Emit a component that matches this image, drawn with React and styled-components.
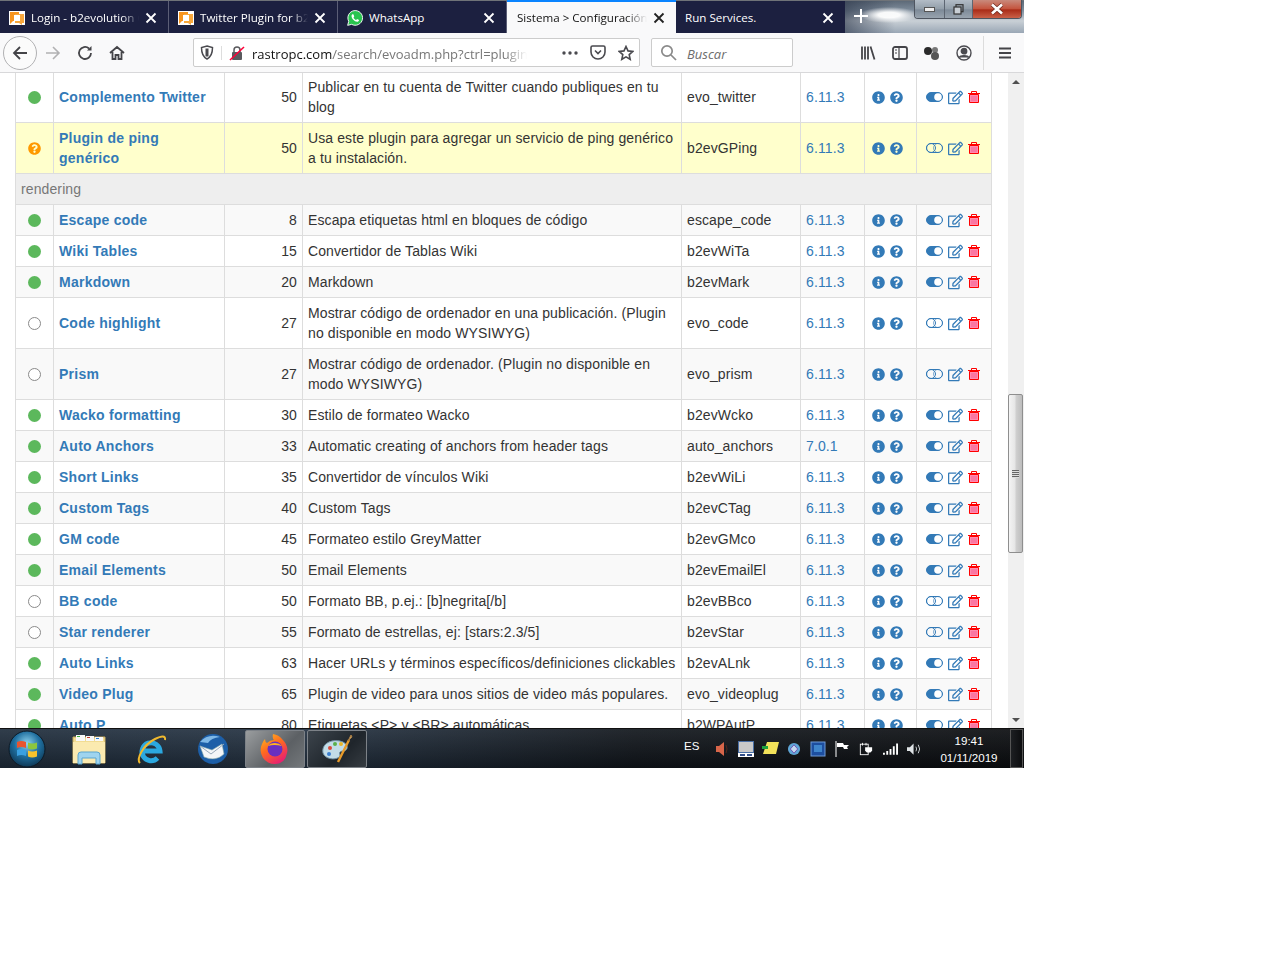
import React from 'react'
import styled, { createGlobalStyle } from 'styled-components'
import { FaInfoCircle, FaQuestionCircle, FaRegEdit } from 'react-icons/fa'

const GlobalStyle = createGlobalStyle`
  html, body { margin: 0; padding: 0; background: #fff; }
  body { font-family: "Liberation Sans", Arial, sans-serif; }
  svg { flex: none; display: block; }
`

const groupOne = [
  { state: 'on', name: 'Complemento Twitter', prio: 50, desc: 'Publicar en tu cuenta de Twitter cuando publiques en tu blog', code: 'evo_twitter' },
  { state: 'warn', name: 'Plugin de ping genérico', prio: 50, desc: 'Usa este plugin para agregar un servicio de ping genérico a tu instalación.', code: 'b2evGPing' },
]

const groupTwo = [
  { state: 'on', name: 'Escape code', prio: 8, desc: 'Escapa etiquetas html en bloques de código', code: 'escape_code' },
  { state: 'on', name: 'Wiki Tables', prio: 15, desc: 'Convertidor de Tablas Wiki', code: 'b2evWiTa' },
  { state: 'on', name: 'Markdown', prio: 20, desc: 'Markdown', code: 'b2evMark' },
  { state: 'off', name: 'Code highlight', prio: 27, desc: 'Mostrar código de ordenador en una publicación. (Plugin no disponible en modo WYSIWYG)', code: 'evo_code' },
  { state: 'off', name: 'Prism', prio: 27, desc: 'Mostrar código de ordenador. (Plugin no disponible en modo WYSIWYG)', code: 'evo_prism' },
  { state: 'on', name: 'Wacko formatting', prio: 30, desc: 'Estilo de formateo Wacko', code: 'b2evWcko' },
  { state: 'on', name: 'Auto Anchors', prio: 33, desc: 'Automatic creating of anchors from header tags', code: 'auto_anchors', version: '7.0.1' },
  { state: 'on', name: 'Short Links', prio: 35, desc: 'Convertidor de vínculos Wiki', code: 'b2evWiLi' },
  { state: 'on', name: 'Custom Tags', prio: 40, desc: 'Custom Tags', code: 'b2evCTag' },
  { state: 'on', name: 'GM code', prio: 45, desc: 'Formateo estilo GreyMatter', code: 'b2evGMco' },
  { state: 'on', name: 'Email Elements', prio: 50, desc: 'Email Elements', code: 'b2evEmailEl' },
  { state: 'off', name: 'BB code', prio: 50, desc: 'Formato BB, p.ej.: [b]negrita[/b]', code: 'b2evBBco' },
  { state: 'off', name: 'Star renderer', prio: 55, desc: 'Formato de estrellas, ej: [stars:2.3/5]', code: 'b2evStar' },
  { state: 'on', name: 'Auto Links', prio: 63, desc: 'Hacer URLs y términos específicos/definiciones clickables', code: 'b2evALnk' },
  { state: 'on', name: 'Video Plug', prio: 65, desc: 'Plugin de video para unos sitios de video más populares.', code: 'evo_videoplug' },
  { state: 'on', name: 'Auto P', prio: 80, desc: 'Etiquetas <P> y <BR> automáticas', code: 'b2WPAutP' },
]

const columns = [38, 171, 78, 379, 119, 64, 52, 75]

const Screen = styled.div`
  width: 1024px;
  height: 768px;
  display: flex;
  flex-direction: column;
  overflow: hidden;
`

/* browser chrome */
const TabBar = styled.div`
  height: 33px;
  flex: none;
  display: flex;
  background: #1c2040;
  border-top: 1px solid #6f7378;
  box-sizing: border-box;
`

const Tab = styled.div`
  width: 169px;
  flex: none;
  box-sizing: border-box;
  display: flex;
  align-items: center;
  gap: 6px;
  padding: ${p => (p.$active ? '3px 11px 0 10px' : '2px 11px 0 9px')};
  background: ${p => (p.$active ? '#f9f9fa' : 'transparent')};
  color: ${p => (p.$active ? '#111' : '#fff')};
  border-right: ${p => (p.$active || p.$plain ? '0' : '1px solid #5b5e76')};
  box-shadow: ${p => (p.$active ? 'inset 0 2px 0 #0a84ff' : 'none')};
  margin-top: ${p => (p.$active ? '-1px' : '0')};
`

const TabTitle = styled.span`
  flex: 1;
  min-width: 0;
  margin-top: -2px;
  font: 11.6px "Open Sans", sans-serif;
  white-space: nowrap;
  overflow: hidden;
  ${p => (p.$short ? '' : `
    -webkit-mask-image: linear-gradient(to right, #000 84%, transparent);
    mask-image: linear-gradient(to right, #000 84%, transparent);
  `)}
`

const GlassCorner = styled.div`
  flex: 1;
  position: relative;
  background:
    radial-gradient(ellipse 30px 8px at 44px 14px, rgba(255, 255, 255, 0.95) 35%, rgba(255, 255, 255, 0) 100%),
    linear-gradient(90deg, rgba(40, 50, 70, 0.6) 0%, rgba(40, 50, 70, 0) 28%),
    linear-gradient(180deg, #5d6a78 0%, #7f8d9c 30%, #c9d0d6 62%, #9aa7b5 100%);
  display: flex;
  align-items: center;
  padding: 0 0 2px 9px;
`

const WindowButtons = styled.div`
  position: absolute;
  right: 2px;
  top: -1px;
  height: 18px;
  display: flex;
  border: 1px solid #4e5560;
  border-top: 0;
  border-radius: 0 0 4px 4px;
  overflow: hidden;
`

const WindowButton = styled.div`
  width: ${p => p.$w}px;
  display: flex;
  align-items: center;
  justify-content: center;
  border-left: ${p => (p.$first ? '0' : '1px solid #5d6672')};
  background: ${p => (p.$close
    ? 'linear-gradient(180deg, #c98a7c 0%, #c4553f 48%, #a92c18 55%, #c96048 100%)'
    : 'linear-gradient(180deg, #b2bcc6 0%, #939faa 48%, #7d8a98 55%, #98a3ae 100%)')};
`

const Toolbar = styled.div`
  height: 40px;
  flex: none;
  box-sizing: border-box;
  display: flex;
  align-items: center;
  background: #f9f9fa;
  border-bottom: 1px solid #d8d8da;
  padding: 0 2px 0 3px;
`

const BackButton = styled.div`
  width: 32px;
  height: 32px;
  border: 1px solid #b1b1b3;
  border-radius: 50%;
  background: #fbfbfb;
  display: flex;
  align-items: center;
  justify-content: center;
  flex: none;
`

const ToolIcon = styled.div`
  width: ${p => p.$w || 32}px;
  flex: none;
  display: flex;
  align-items: center;
  justify-content: center;
`

const UrlBox = styled.div`
  width: 447px;
  height: 29px;
  margin-left: 60px;
  flex: none;
  box-sizing: border-box;
  background: #fff;
  border: 1px solid #ccc;
  border-radius: 2px;
  display: flex;
  align-items: center;
  padding: 0 4px 0 6px;
`

const UrlText = styled.div`
  width: 275px;
  margin-left: 7px;
  padding-top: 2px;
  font: 13px "Open Sans", sans-serif;
  color: #777;
  white-space: nowrap;
  overflow: hidden;
  -webkit-mask-image: linear-gradient(to right, #000 92%, transparent);
  mask-image: linear-gradient(to right, #000 92%, transparent);
  b { font-weight: 400; color: #111; }
`

const UrlDivider = styled.div`
  width: 1px;
  height: 14px;
  background: #ddd;
  margin: 0 7px;
`

const UrlAction = styled.span`
  display: block;
  margin-right: ${p => p.$gap}px;
`

const SearchBox = styled.div`
  width: 142px;
  height: 29px;
  margin-left: 11px;
  flex: none;
  box-sizing: border-box;
  background: #fff;
  border: 1px solid #ccc;
  border-radius: 2px;
  display: flex;
  align-items: center;
  gap: 10px;
  padding-left: 8px;
  font: italic 13px "Open Sans", sans-serif;
  color: #6d6d6d;
  span { padding-top: 2px; }
`

const Spacer = styled.div`
  flex: 1;
`

const ToolDivider = styled.div`
  width: 1px;
  height: 34px;
  background: #dcdcdc;
  margin: 0 3px;
`

/* page */
const Viewport = styled.div`
  height: 655px;
  flex: none;
  display: flex;
  overflow: hidden;
  background: #fff;
`

const PageBody = styled.div`
  flex: 1;
  padding-left: 15px;
  min-width: 0;
`

const Table = styled.table`
  width: 977px;
  margin-top: -2px;
  table-layout: fixed;
  border-collapse: collapse;
  font-size: 14px;
  line-height: 20px;
  letter-spacing: 0.11px;
  color: #333;
`

const Column = styled.col`
  width: ${p => p.$w}px;
`

const Row = styled.tr`
  background: ${p => (p.$warn ? '#ffc' : p.$odd ? '#f9f9f9' : '#fff')};
`

const Cell = styled.td`
  border: 1px solid #ddd;
  padding: 5px;
  text-align: ${p => p.$align || 'left'};
  vertical-align: middle;
  white-space: ${p => (p.$nowrap ? 'nowrap' : 'normal')};
  overflow: hidden;
`

const GroupCell = styled.td`
  border: 1px solid #ddd;
  padding: 5px;
  background: #eee;
  color: #777;
`

const NameLink = styled.a`
  color: #337ab7;
  font-weight: 700;
  letter-spacing: 0.25px;
`

const VersionLink = styled.a`
  color: #337ab7;
`

const Dot = styled.span`
  display: block;
  margin: 0 auto;
  box-sizing: border-box;
  width: 13px;
  height: 13px;
  border-radius: 50%;
  background: ${p => (p.$on ? '#5cb85c' : '#fff')};
  border: ${p => (p.$on ? '0' : '1px solid #8a8a8a')};
`

const WarnMark = styled.span`
  display: flex;
  justify-content: center;
  color: #f90;
  font-size: 13px;
`

const IconRow = styled.div`
  display: flex;
  align-items: center;
  padding-left: ${p => p.$inset}px;
  gap: ${p => p.$gap}px;
  color: #337ab7;
  font-size: 13px;
`

const Scrollbar = styled.div`
  width: 16px;
  flex: none;
  background: #f0f0f0;
  display: flex;
  flex-direction: column;
  align-items: center;
  justify-content: space-between;
  position: relative;
`

const ScrollArrow = styled.div`
  width: 0;
  height: 0;
  margin: ${p => (p.$up ? '7px 0 0' : '0 0 6px')};
  border-left: 4px solid transparent;
  border-right: 4px solid transparent;
  border-bottom: ${p => (p.$up ? '4px solid #505050' : '0')};
  border-top: ${p => (p.$up ? '0' : '4px solid #505050')};
`

const ScrollThumb = styled.div`
  position: absolute;
  left: 0;
  right: 1px;
  top: 321px;
  height: 159px;
  box-sizing: border-box;
  border: 1px solid #8e8e8e;
  border-radius: 2px;
  background: linear-gradient(90deg, #f4f4f4 0%, #e6e6e6 45%, #cfcfcf 55%, #bdbdbd 100%);
  display: flex;
  align-items: center;
  justify-content: center;
  &::after {
    content: '';
    width: 7px;
    height: 8px;
    background: repeating-linear-gradient(180deg, #666 0 1px, #ddd 1px 2px);
  }
`

/* taskbar */
const Taskbar = styled.div`
  height: 40px;
  flex: none;
  box-sizing: border-box;
  display: flex;
  align-items: center;
  border-top: 1px solid #111;
  background:
    linear-gradient(180deg, rgba(255, 255, 255, 0.08), rgba(0, 0, 0, 0.25)),
    linear-gradient(90deg, #1f2d3c 0%, #243242 30%, #11161c 62%, #0b0d10 100%);
  color: #fff;
`

const Orb = styled.div`
  width: 59px;
  flex: none;
  display: flex;
  justify-content: center;
  padding-right: 5px;
  box-sizing: border-box;
`

const TaskSlot = styled.div`
  width: 60px;
  height: 38px;
  margin-right: 2px;
  flex: none;
  box-sizing: border-box;
  display: flex;
  align-items: center;
  justify-content: center;
  border-radius: 2px;
  border: ${p => (p.$open ? '1px solid #7d8288' : '1px solid transparent')};
  background: ${p => (p.$active
    ? 'linear-gradient(135deg, #9a9d9f, #5c6064 60%, #74787b)'
    : p.$open ? 'linear-gradient(135deg, #3c444c, #1f252b 60%, #363c42)' : 'transparent')};
`

const LangLabel = styled.span`
  width: 26px;
  font: 11.5px "Liberation Sans", sans-serif;
  margin-bottom: 5px;
`

const Tray = styled.div`
  display: flex;
  align-items: center;
`

const TraySlot = styled.div`
  width: 24px;
  display: flex;
  justify-content: center;
`

const Clock = styled.div`
  width: 82px;
  margin: 0 0 0 2px;
  text-align: center;
  font: 11.6px/17px "Liberation Sans", sans-serif;
`

const ShowDesktop = styled.div`
  width: 13px;
  align-self: stretch;
  margin-right: 1px;
  box-sizing: border-box;
  border: 1px solid #555;
  background: linear-gradient(90deg, #1d1f22, #0c0d0f);
`

/* drawings */
const B2Logo = () => (
  <svg width="16" height="16" viewBox="0 0 16 16">
    <rect x="0" y="1" width="16" height="14" fill="#fff" />
    <path d="M1 2h9v9H4l-3 3z" fill="#f7941e" />
    <path d="M6 4h9v9h-2v2l-3-2H6z" fill="#f9a83c" />
    <path d="M5 5h6v6H5z" fill="#fff" />
  </svg>
)

const WhatsappLogo = () => (
  <svg width="16" height="16" viewBox="0 0 24 24">
    <path d="M1 23l1.600-6A11 11 0 1 1 7 21.500z" fill="#29c44f" stroke="#fff" strokeWidth="1.400" />
    <path d="M8.500 6.500c-.7 0-1.700 1-1.700 2.700 0 3.300 4.400 8 8.300 8.400 1.600 0 2.900-1.300 2.900-2.300 0-.5-2.400-1.700-2.800-1.700-.5 0-1 1.300-1.500 1.300-1.200 0-3.900-2.600-3.900-3.700 0-.5 1-1 1-1.500 0-.6-1-3.200-1.500-3.200z" fill="#fff" />
  </svg>
)

const CloseX = ({ dark }) => (
  <svg width="12" height="12" viewBox="0 0 12 12">
    <path d="M1.500 1.500l9 9M10.500 1.500l-9 9" stroke={dark ? '#222' : '#fff'} strokeWidth="1.800" />
  </svg>
)

const Glyph = ({ size = 16, children }) => (
  <svg width={size} height={size} viewBox="0 0 16 16" fill="none" stroke="#444448" strokeWidth="1.800">
    {children}
  </svg>
)

const Toggle = ({ on }) => (
  <svg width="17" height="10" viewBox="0 0 17 10">
    {on ? (
      <>
        <rect x="0.500" y="0.500" width="16" height="9" rx="4.500" fill="#337ab7" stroke="#337ab7" />
        <circle cx="12" cy="5" r="3.800" fill="#fff" />
      </>
    ) : (
      <>
        <rect x="0.500" y="0.500" width="16" height="9" rx="4.500" fill="none" stroke="#337ab7" />
        <circle cx="5" cy="5" r="4.500" fill="none" stroke="#337ab7" />
        <circle cx="12" cy="5" r="4.500" fill="none" stroke="#337ab7" strokeOpacity="0.600" />
      </>
    )}
  </svg>
)

const Trash = () => (
  <svg width="12" height="12" viewBox="0 0 12 12">
    <path d="M1.500 3.500h9v8h-9z" fill="#ff8cb0" stroke="#f00" />
    <path d="M0 2.500h12M3.500 2.500v-2h5v2" fill="none" stroke="#f00" />
    <path d="M4 5v5M6 5v5M8 5v5" stroke="#f0508a" strokeWidth="0.700" />
  </svg>
)

const TabsRow = () => (
  <TabBar>
    <Tab><B2Logo /><TabTitle>Login - b2evolution CMS</TabTitle><CloseX /></Tab>
    <Tab><B2Logo /><TabTitle>Twitter Plugin for b2evolution</TabTitle><CloseX /></Tab>
    <Tab><WhatsappLogo /><TabTitle $short>WhatsApp</TabTitle><CloseX /></Tab>
    <Tab $active><TabTitle>Sistema &gt; Configuración del blog</TabTitle><CloseX dark /></Tab>
    <Tab $plain><TabTitle $short>Run Services.</TabTitle><CloseX /></Tab>
    <GlassCorner>
      <svg width="14" height="14" viewBox="0 0 14 14"><path d="M7 0v14M0 7h14" stroke="#fff" strokeWidth="2" /></svg>
      <WindowButtons>
        <WindowButton $first $w={29}>
          <svg width="11" height="5" viewBox="0 0 11 5"><rect x="0.500" y="0.500" width="10" height="4" fill="#eee" stroke="#555" /></svg>
        </WindowButton>
        <WindowButton $w={27}>
          <svg width="11" height="11" viewBox="0 0 11 11" fill="none" stroke="#333" strokeWidth="1.200"><rect x="3" y="0.700" width="7" height="7" /><rect x="1" y="3" width="7" height="7" fill="#c8ced4" /></svg>
        </WindowButton>
        <WindowButton $close $w={48}>
          <svg width="16" height="12" viewBox="0 0 16 12">
            <path d="M3 1.500l10 9M13 1.500L3 10.500" stroke="#6a2a20" strokeWidth="4" />
            <path d="M3 1.500l10 9M13 1.500L3 10.500" stroke="#fff" strokeWidth="2.600" />
          </svg>
        </WindowButton>
      </WindowButtons>
    </GlassCorner>
  </TabBar>
)

const ToolRow = () => (
  <Toolbar>
    <BackButton>
      <Glyph><path d="M15 8H2M8 2L2 8l6 6" /></Glyph>
    </BackButton>
    <ToolIcon>
      <svg width="16" height="16" viewBox="0 0 16 16" fill="none" stroke="#b1b1b3" strokeWidth="1.600"><path d="M1 8h13M8 2l6 6-6 6" /></svg>
    </ToolIcon>
    <ToolIcon>
      <Glyph><path d="M14 8a6 6 0 1 1-2-4.500" /><path d="M14.500 1v4.500H10" fill="#444448" stroke="none" /></Glyph>
    </ToolIcon>
    <ToolIcon>
      <Glyph><path d="M1 8l7-6 7 6M3.500 7v7h3v-4h3v4h3V7" /></Glyph>
    </ToolIcon>
    <UrlBox>
      <svg width="14" height="15" viewBox="0 0 14 15" fill="none" stroke="#4a4a4f" strokeWidth="1.500"><path d="M7 1l5.500 1.500c0 6-1.500 9.500-5.500 11.500C3 12 1.500 8.500 1.500 2.500z" /><path d="M7 3.500v8" strokeWidth="3" /></svg>
      <UrlDivider />
      <svg width="16" height="16" viewBox="0 0 16 16">
        <rect x="3" y="7" width="10" height="8" rx="1" fill="#5a5a5e" />
        <path d="M5 7V5a3 3 0 0 1 6 0v2" fill="none" stroke="#5a5a5e" strokeWidth="1.500" />
        <path d="M1 15L15 2" stroke="#ff0039" strokeWidth="1.600" />
      </svg>
      <UrlText><b>rastropc.com</b>/search/evoadm.php?ctrl=plugins</UrlText>
      <Spacer />
      <UrlAction $gap={12}>
        <svg width="16" height="4" viewBox="0 0 16 4" fill="#4a4a4f"><circle cx="2" cy="2" r="1.700" /><circle cx="8" cy="2" r="1.700" /><circle cx="14" cy="2" r="1.700" /></svg>
      </UrlAction>
      <UrlAction $gap={12}>
        <svg width="16" height="15" viewBox="0 0 16 15" fill="none" stroke="#4a4a4f" strokeWidth="1.600"><path d="M1 2.500Q1 1 2.500 1h11Q15 1 15 2.500V7a7 7 0 0 1-14 0z" /><path d="M5 5.500l3 3 3-3" /></svg>
      </UrlAction>
      <UrlAction $gap={1}>
        <svg width="16" height="16" viewBox="0 0 16 16" fill="none" stroke="#4a4a4f" strokeWidth="1.600"><path d="M8 1.500l2 4.400 4.800.5-3.600 3.200 1 4.700L8 11.900l-4.200 2.400 1-4.700L1.200 6.400 6 5.900z" /></svg>
      </UrlAction>
    </UrlBox>
    <SearchBox>
      <svg width="17" height="17" viewBox="0 0 17 17" fill="none" stroke="#8a8a8a" strokeWidth="1.700"><circle cx="7" cy="7" r="5.200" /><path d="M11 11l5 5" /></svg>
      <span>Buscar</span>
    </SearchBox>
    <Spacer />
    <ToolIcon>
      <Glyph><path d="M2 1.500v13M5 1.500v13M8 1.500v13M10.500 1.500l4 13" /></Glyph>
    </ToolIcon>
    <ToolIcon>
      <Glyph><rect x="1" y="2" width="14" height="12" rx="2" /><path d="M7 2v12M3 5h2M3 8h2" strokeWidth="1.200" /></Glyph>
    </ToolIcon>
    <ToolIcon>
      <svg width="18" height="16" viewBox="0 0 18 16"><circle cx="5" cy="6" r="4" fill="#2b2b2b" /><circle cx="12" cy="5" r="3" fill="#777" /><circle cx="12" cy="11" r="4" fill="#555" /></svg>
    </ToolIcon>
    <ToolIcon>
      <svg width="16" height="16" viewBox="0 0 16 16" fill="none" stroke="#4a4a4f" strokeWidth="1.400"><circle cx="8" cy="8" r="7" /><circle cx="8" cy="6.200" r="2.700" fill="#4a4a4f" /><path d="M3.300 12.500c1-2.300 8.400-2.300 9.400 0" fill="#4a4a4f" /></svg>
    </ToolIcon>
    <ToolDivider />
    <ToolIcon $w={35}>
      <Glyph><path d="M2 3.500h12M2 8h12M2 12.500h12" /></Glyph>
    </ToolIcon>
  </Toolbar>
)

const StateMark = ({ state }) => {
  if (state === 'warn') return <WarnMark><FaQuestionCircle /></WarnMark>
  return <Dot $on={state === 'on'} />
}

const PluginRow = ({ plugin, odd }) => (
  <Row $warn={plugin.state === 'warn'} $odd={odd}>
    <Cell><StateMark state={plugin.state} /></Cell>
    <Cell><NameLink>{plugin.name}</NameLink></Cell>
    <Cell $align="right">{plugin.prio}</Cell>
    <Cell>{plugin.desc}</Cell>
    <Cell $nowrap>{plugin.code}</Cell>
    <Cell><VersionLink>{plugin.version || '6.11.3'}</VersionLink></Cell>
    <Cell>
      <IconRow $inset={2} $gap={5}><FaInfoCircle /><FaQuestionCircle /></IconRow>
    </Cell>
    <Cell>
      <IconRow $inset={4} $gap={5}>
        <Toggle on={plugin.state === 'on'} />
        <FaRegEdit size={15} />
        <Trash />
      </IconRow>
    </Cell>
  </Row>
)

const PluginTable = () => (
  <Table>
    <colgroup>
      {columns.map((w, i) => <Column key={i} $w={w} />)}
    </colgroup>
    <tbody>
      {groupOne.map(p => <PluginRow key={p.name} plugin={p} />)}
      <tr><GroupCell colSpan={8}>rendering</GroupCell></tr>
      {groupTwo.map((p, i) => <PluginRow key={p.name} plugin={p} odd={i % 2 === 0} />)}
    </tbody>
  </Table>
)

const TaskbarRow = () => (
  <Taskbar>
    <Orb>
      <svg width="38" height="38" viewBox="0 0 38 38">
        <defs>
          <radialGradient id="orb" cx="50%" cy="35%" r="70%"><stop offset="0" stopColor="#8fd3ee" /><stop offset="0.5" stopColor="#1f6f9f" /><stop offset="1" stopColor="#0b2f4a" /></radialGradient>
        </defs>
        <circle cx="19" cy="19" r="18" fill="url(#orb)" stroke="#0d1a26" />
        <path d="M9 12q4-2 9 0v6q-5-2-9 0z" fill="#e8542f" />
        <path d="M20 12.500q4 2 9 0v6q-5 2-9 0z" fill="#8cc63f" />
        <path d="M9 20q4-2 9 0v6q-5-2-9 0z" fill="#3aa0e0" />
        <path d="M20 20.500q4 2 9 0v6q-5 2-9 0z" fill="#f8c32c" />
      </svg>
    </Orb>
    <TaskSlot>
      <svg width="34" height="32" viewBox="0 0 34 32">
        <path d="M1 4h32v26H1z" fill="#f2dc93" stroke="#c7ab5f" />
        <path d="M4 2h9v6H4zM14 3h8v5h-8zM23 4h8v4h-8z" fill="#f8f8f8" />
        <path d="M5 3h3v1H5z" fill="#3fae3f" /><path d="M15 4h3v1h-3z" fill="#c0392b" /><path d="M24 5h3v1h-3z" fill="#2b7fd0" />
        <path d="M1 9h32v21H1z" fill="#fbeab0" />
        <path d="M6 31v-9q0-3 3-3h16q3 0 3 3v9h-4v-6H10v6z" fill="#9fd4ef" stroke="#5aa5cf" />
      </svg>
    </TaskSlot>
    <TaskSlot>
      <svg width="32" height="32" viewBox="0 0 32 32">
        <path d="M8 18h17A9 9 0 1 0 22.500 25" fill="none" stroke="#2ba8e0" strokeWidth="5" />
        <path d="M5 30C1 26 8 12 20 6c6-3 11-4 10 1" fill="none" stroke="#f0b92e" strokeWidth="2" />
      </svg>
    </TaskSlot>
    <TaskSlot>
      <svg width="32" height="32" viewBox="0 0 32 32">
        <circle cx="16" cy="16" r="15" fill="#1d5fa8" />
        <path d="M3 9q8-9 20-5-9 1-12 6z" fill="#7fb8e6" />
        <path d="M3 13l12 4 10-6 2 10q-8 8-20 3z" fill="#f4f6f8" stroke="#8aa" strokeWidth="0.600" />
        <path d="M3 13l11 8 13-10" fill="none" stroke="#9ab" />
      </svg>
    </TaskSlot>
    <TaskSlot $open $active>
      <svg width="32" height="32" viewBox="0 0 32 32">
        <defs>
          <linearGradient id="fx" x1="0" y1="0" x2="0.600" y2="1"><stop offset="0" stopColor="#ffc21f" /><stop offset="0.5" stopColor="#ff6a1f" /><stop offset="1" stopColor="#e8226e" /></linearGradient>
        </defs>
        <path d="M16 31A14 14 0 0 1 3 11q1-3 3-5 0 3 2 4 3-3 7-3-2-2-1-6 6 1 9 5 7 7 5 14-2 11-12 11z" fill="url(#fx)" />
        <circle cx="16" cy="16" r="7.500" fill="#6a2fc0" />
        <path d="M9 13q6-2 14 0-3-3-7-3-5 0-7 3z" fill="#ffb21f" />
      </svg>
    </TaskSlot>
    <TaskSlot $open>
      <svg width="32" height="32" viewBox="0 0 32 32">
        <path d="M2 20C0 10 12 5 22 9c6 3 5 8 1 9-4 0-5 1-4 4 0 5-14 6-17-2z" fill="#c3dde8" stroke="#6f8fa0" />
        <circle cx="9" cy="15" r="2" fill="#d94a3a" /><circle cx="14" cy="11" r="2" fill="#5ab04a" /><circle cx="20" cy="11" r="2" fill="#e8b52a" /><circle cx="8" cy="21" r="2" fill="#3a7fd0" />
        <path d="M17 29L28 7" stroke="#e89a2a" strokeWidth="2.400" />
        <path d="M27 8l3-6 1 2z" fill="#c9a36a" stroke="#a87d42" />
      </svg>
    </TaskSlot>
    <Spacer />
    <LangLabel>ES</LangLabel>
    <Tray>
      <TraySlot><svg width="15" height="16" viewBox="0 0 15 16"><path d="M1 5h3l5-4v14l-5-4H1z" fill="#d8664a" /><path d="M11 4q2 4 0 8" stroke="#53261c" fill="none" /></svg></TraySlot>
      <TraySlot><svg width="16" height="16" viewBox="0 0 16 16"><rect x="0.500" y="0.500" width="15" height="11" fill="#c9c9c9" stroke="#4a6fa5" /><path d="M0 12h16v4H0z" fill="#fff" /><path d="M2 13h5v2H2zM9 13h5v2H9z" fill="#33508a" /></svg></TraySlot>
      <TraySlot><svg width="17" height="15" viewBox="0 0 17 15"><path d="M5 1h12l-3 12H1z" fill="#f2e25a" /><path d="M0 5h6v3H0z" fill="#1fa33c" /></svg></TraySlot>
      <TraySlot><svg width="14" height="14" viewBox="0 0 15 15"><circle cx="7.500" cy="7.500" r="6.500" fill="#5fa6d6" /><path d="M7.500 3l4 4.500-4 4.500-4-4.500z" fill="#c5d8ef" stroke="#6a4fb0" /></svg></TraySlot>
      <TraySlot><svg width="16" height="16" viewBox="0 0 16 16"><rect x="1" y="1" width="14" height="14" fill="#1d4fa0" stroke="#6f9bd8" /><path d="M4 4h8v7H4z" fill="#3f86cc" /></svg></TraySlot>
      <TraySlot><svg width="15" height="16" viewBox="0 0 15 16"><path d="M1 0v16" stroke="#fff" /><path d="M2 2h6l1 2h5l-2 2 1 2H9L8 6H2z" fill="#fff" /></svg></TraySlot>
      <TraySlot><svg width="14" height="16" viewBox="0 0 16 16"><rect x="1.500" y="2.500" width="9" height="12" fill="none" stroke="#fff" /><path d="M4 1v3M8 1v3" stroke="#fff" /><path d="M7 6h8v4l-2 2H9l-2-2z" fill="#fff" /></svg></TraySlot>
      <TraySlot><svg width="15" height="12" viewBox="0 0 16 12" fill="#fff"><path d="M0 10h2v2H0zM3.500 8h2v4h-2zM7 6h2v6H7zM10.500 3h2v9h-2zM14 0h2v12h-2z" /></svg></TraySlot>
      <TraySlot><svg width="15" height="14" viewBox="0 0 16 14"><path d="M0 5h3l4-4v12l-4-4H0z" fill="#dfe3e6" /><path d="M9.500 4.500q1.500 2.500 0 5M12 2.500q3 4.500 0 9" fill="none" stroke="#cfd3d6" /></svg></TraySlot>
    </Tray>
    <Clock>19:41<br />01/11/2019</Clock>
    <ShowDesktop />
  </Taskbar>
)

const App = () => (
  <Screen>
    <GlobalStyle />
    <TabsRow />
    <ToolRow />
    <Viewport>
      <PageBody>
        <PluginTable />
      </PageBody>
      <Scrollbar>
        <ScrollArrow $up />
        <ScrollThumb />
        <ScrollArrow />
      </Scrollbar>
    </Viewport>
    <TaskbarRow />
  </Screen>
)

export default App
